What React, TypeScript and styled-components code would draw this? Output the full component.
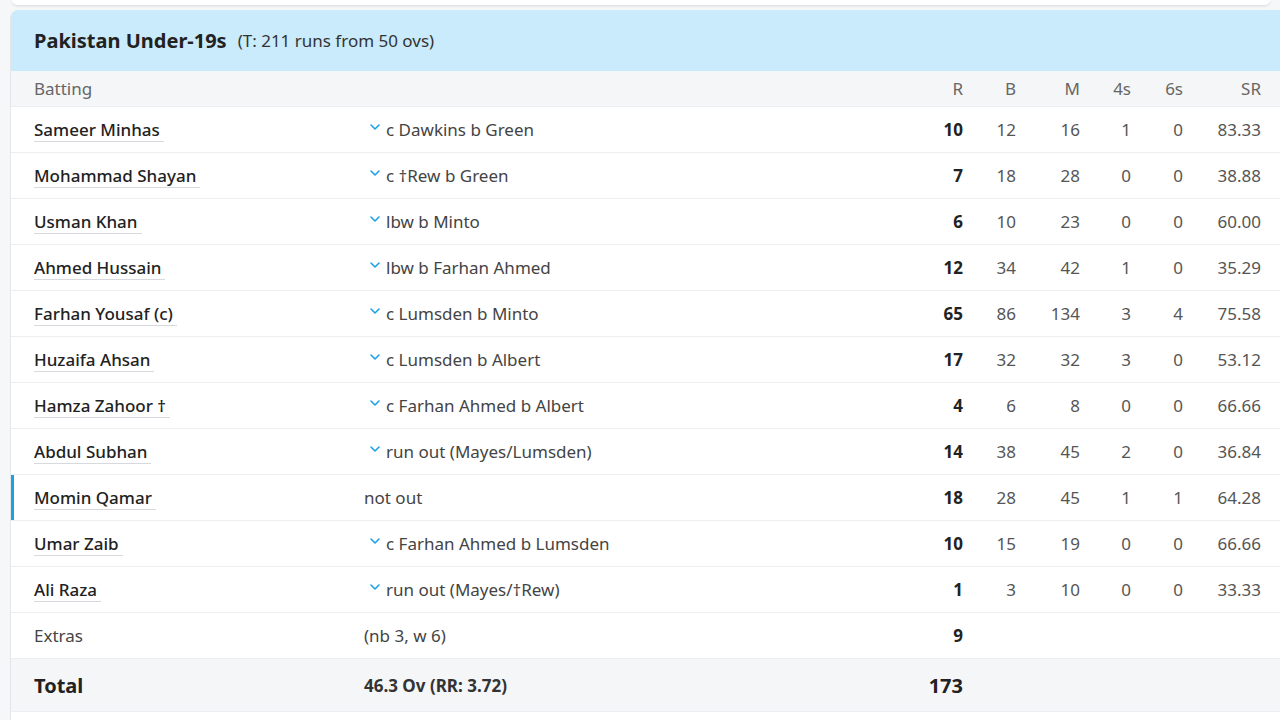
import React from "react";
import styled, { createGlobalStyle } from "styled-components";

const Global = createGlobalStyle`
  html, body { margin: 0; padding: 0; background: #f6f7f9; }
  body { font-family: "Noto Sans", "Open Sans", "Liberation Sans", sans-serif; color: #222; }
`;

const Page = styled.div`
  width: 1280px;
  height: 720px;
  overflow: hidden;
  display: flex;
  flex-direction: column;
  align-items: flex-start;
`;

const PrevCard = styled.div`
  margin-left: 12px;
  width: 1258px;
  height: 5px;
  background: #fff;
  border-radius: 0 0 8px 8px;
  box-shadow: 0 1px 3px rgba(0, 0, 0, 0.12);
  flex-shrink: 0;
`;

const Card = styled.div`
  margin-top: 5px;
  margin-left: 10px;
  width: 1270px;
  background: #fff;
  border-left: 1px solid #e4e7ea;
  border-top-left-radius: 8px;
  overflow: hidden;
  flex-shrink: 0;
`;

const TeamHeader = styled.div`
  height: 61px;
  background: #caebfb;
  display: flex;
  align-items: center;
  gap: 11px;
  padding-left: 23px;
`;

const TeamName = styled.span`
  font-size: 20px;
  font-weight: 700;
  color: #222;
`;

const Target = styled.span`
  font-size: 17px;
  color: #333;
`;

const cols = "330px 536px 63px 53px 64px 51px 52px 78px";

const Row = styled.div<{ $bg?: string; $h: number; $active?: boolean }>`
  display: grid;
  grid-template-columns: ${cols};
  align-items: center;
  height: ${(p) => p.$h}px;
  padding: 0 19px 0 23px;
  background: ${(p) => p.$bg || "#fff"};
  border-bottom: 1px solid #eceef1;
  box-sizing: border-box;
  box-shadow: ${(p) => (p.$active ? "inset 3px 0 0 #1ea0df" : "none")};
`;

const HeadCell = styled.div<{ $right?: boolean }>`
  font-size: 17px;
  color: #666;
  text-align: ${(p) => (p.$right ? "right" : "left")};
`;

const NameCell = styled.div``;

const Name = styled.span`
  font-size: 17px;
  font-weight: 500;
  color: #222;
  padding-right: 4px;
  border-bottom: 1px solid #d6d9dd;
`;

const Dismissal = styled.div<{ $plain?: boolean }>`
  font-size: 17px;
  color: #444;
  display: flex;
  align-items: center;
  gap: 5px;
  padding-left: ${(p) => (p.$plain ? "0" : "5px")};
`;

const Chevron = styled.svg`
  width: 12px;
  height: 12px;
  flex-shrink: 0;
  margin-top: -5px;
`;

const Num = styled.div<{ $bold?: boolean; $big?: boolean }>`
  text-align: right;
  font-size: ${(p) => (p.$big ? "20px" : "17px")};
  font-weight: ${(p) => (p.$bold ? 700 : 400)};
  color: ${(p) => (p.$bold ? "#222" : "#555")};
`;

const Label = styled.div`
  font-size: 17px;
  color: #444;
`;

const TotalLabel = styled.div`
  font-size: 20px;
  font-weight: 700;
  color: #222;
`;

const TotalInfo = styled.div`
  font-size: 17px;
  font-weight: 700;
  color: #333;
`;

const Footer = styled.div`
  height: 12px;
  background: #fff;
`;

type Bat = { n: string; d: string; r: number; b: number; m: number; f: number; s: number; sr: string; notout?: boolean };

const batters: Bat[] = [
  { n: "Sameer Minhas", d: "c Dawkins b Green", r: 10, b: 12, m: 16, f: 1, s: 0, sr: "83.33" },
  { n: "Mohammad Shayan", d: "c †Rew b Green", r: 7, b: 18, m: 28, f: 0, s: 0, sr: "38.88" },
  { n: "Usman Khan", d: "lbw b Minto", r: 6, b: 10, m: 23, f: 0, s: 0, sr: "60.00" },
  { n: "Ahmed Hussain", d: "lbw b Farhan Ahmed", r: 12, b: 34, m: 42, f: 1, s: 0, sr: "35.29" },
  { n: "Farhan Yousaf (c)", d: "c Lumsden b Minto", r: 65, b: 86, m: 134, f: 3, s: 4, sr: "75.58" },
  { n: "Huzaifa Ahsan", d: "c Lumsden b Albert", r: 17, b: 32, m: 32, f: 3, s: 0, sr: "53.12" },
  { n: "Hamza Zahoor †", d: "c Farhan Ahmed b Albert", r: 4, b: 6, m: 8, f: 0, s: 0, sr: "66.66" },
  { n: "Abdul Subhan", d: "run out (Mayes/Lumsden)", r: 14, b: 38, m: 45, f: 2, s: 0, sr: "36.84" },
  { n: "Momin Qamar", d: "not out", r: 18, b: 28, m: 45, f: 1, s: 1, sr: "64.28", notout: true },
  { n: "Umar Zaib", d: "c Farhan Ahmed b Lumsden", r: 10, b: 15, m: 19, f: 0, s: 0, sr: "66.66" },
  { n: "Ali Raza", d: "run out (Mayes/†Rew)", r: 1, b: 3, m: 10, f: 0, s: 0, sr: "33.33" },
];

const Down = () => (
  <Chevron viewBox="0 0 12 12">
    <path d="M2 4 L6 8 L10 4" fill="none" stroke="#1ba2e6" strokeWidth="1.6" strokeLinecap="round" strokeLinejoin="round" />
  </Chevron>
);

export default function App() {
  return (
    <Page>
      <Global />
      <PrevCard />
      <Card>
        <TeamHeader>
          <TeamName>Pakistan Under-19s</TeamName>
          <Target>(T: 211 runs from 50 ovs)</Target>
        </TeamHeader>
        <Row $h={36} $bg="#f5f6f8">
          <HeadCell>Batting</HeadCell>
          <HeadCell />
          <HeadCell $right>R</HeadCell>
          <HeadCell $right>B</HeadCell>
          <HeadCell $right>M</HeadCell>
          <HeadCell $right>4s</HeadCell>
          <HeadCell $right>6s</HeadCell>
          <HeadCell $right>SR</HeadCell>
        </Row>
        {batters.map((p) => (
          <Row key={p.n} $h={46} $active={p.notout}>
            <NameCell>
              <Name>{p.n}</Name>
            </NameCell>
            <Dismissal $plain={p.notout}>
              {!p.notout && <Down />}
              <span>{p.d}</span>
            </Dismissal>
            <Num $bold>{p.r}</Num>
            <Num>{p.b}</Num>
            <Num>{p.m}</Num>
            <Num>{p.f}</Num>
            <Num>{p.s}</Num>
            <Num>{p.sr}</Num>
          </Row>
        ))}
        <Row $h={46}>
          <Label>Extras</Label>
          <Label>(nb 3, w 6)</Label>
          <Num $bold>9</Num>
        </Row>
        <Row $h={53} $bg="#f5f6f8">
          <TotalLabel>Total</TotalLabel>
          <TotalInfo>46.3 Ov (RR: 3.72)</TotalInfo>
          <Num $bold $big>173</Num>
        </Row>
        <Footer />
      </Card>
    </Page>
  );
}
